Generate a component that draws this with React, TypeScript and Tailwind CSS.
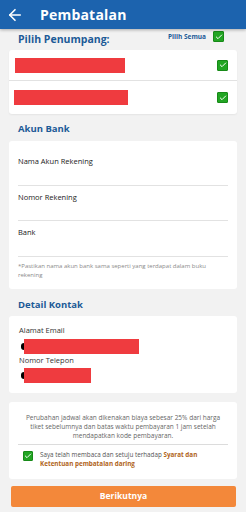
import { ArrowLeft, Check } from 'lucide-react'

function Box({ size = 'w-[11px] h-[11px]' }: { size?: string }) {
  return (
    <span className={`${size} bg-[#22a523] border border-[#178a18] rounded-[1px] flex items-center justify-center`}>
      <Check className="w-[8px] h-[8px] text-white" strokeWidth={3} />
    </span>
  )
}

export default function App() {
  return (
    <div className="w-[246px] h-[512px] bg-[#f2f2f2] overflow-hidden font-['Open_Sans',sans-serif] relative">
      {/* Header */}
      <div className="h-[29px] bg-[#1c63ae] flex items-center shadow-[0_1px_3px_rgba(0,0,0,0.3)] relative z-10">
        <ArrowLeft className="w-[18px] h-[18px] text-white ml-[6px]" strokeWidth={2.2} />
        <span className="text-white font-bold text-[14px] ml-[16px] tracking-[0.2px]">Pembatalan</span>
      </div>

      {/* Pilih Penumpang */}
      <div className="flex items-start justify-between pl-[18px] pr-[22px] h-[19px]">
        <span className="text-[#1c5a97] font-bold text-[10.5px] mt-[2px] leading-[16px]">Pilih Penumpang:</span>
        <div className="flex items-center gap-[7px] mt-[2px]">
          <span className="text-[#1c5a97] font-bold text-[6.5px]">Pilih Semua</span>
          <Box />
        </div>
      </div>

      <div className="mx-[9px] mt-[2px] bg-white rounded-[3px] shadow-[0_1px_2px_rgba(0,0,0,0.06)]">
        <div className="h-[31px] flex items-center justify-between pl-[6px] pr-[9px] border-b border-[#e2e2e2]">
          <div className="w-[110px] h-[15px] bg-[#ef3b3f]" />
          <Box />
        </div>
        <div className="h-[33px] flex items-center justify-between pl-[5px] pr-[9px]">
          <div className="w-[114px] h-[15px] bg-[#ef3b3f]" />
          <Box />
        </div>
      </div>

      {/* Akun Bank */}
      <div className="pl-[18px] mt-[5px] h-[19px] text-[#1c5a97] font-bold text-[9.5px] leading-[19px]">Akun Bank</div>
      <div className="mx-[9px] mt-[3px] bg-white rounded-[3px] px-[9px] pt-[9px] pb-[9px]">
        {['Nama Akun Rekening', 'Nomor Rekening', 'Bank'].map((label) => (
          <div key={label} className="h-[35.5px] border-b border-[#e2e2e2] flex items-start pt-[6px]">
            <span className="text-[#1a1a1a] text-[7.5px]">{label}</span>
          </div>
        ))}
        <p className="text-[#8a8a8a] text-[6px] leading-[9px] mt-[5px]">
          *Pastikan nama akun bank sama seperti yang terdapat dalam buku rekening
        </p>
      </div>

      {/* Detail Kontak */}
      <div className="pl-[18px] mt-[6px] h-[19px] text-[#1c5a97] font-bold text-[9.5px] leading-[19px]">Detail Kontak</div>
      <div className="mx-[9px] mt-[2px] bg-white rounded-[3px] pl-[10px] pt-[9px] pb-[10px]">
        <div className="text-[#333] text-[7.5px] leading-[10px]">Alamat Email</div>
        <div className="flex items-center mt-[4px] pl-[2px]">
          <span className="w-[3px] h-[7px] bg-black rounded-l-full" />
          <div className="w-[115px] h-[15px] bg-[#ef3b3f]" />
        </div>
        <div className="text-[#333] text-[7.5px] leading-[10px] mt-[1px]">Nomor Telepon</div>
        <div className="flex items-center mt-[3px] pl-[2px]">
          <span className="w-[3px] h-[7px] bg-black rounded-l-full" />
          <div className="w-[67px] h-[15px] bg-[#ef3b3f]" />
        </div>
      </div>

      {/* Info */}
      <div className="mx-[9px] mt-[9px] bg-white rounded-[3px] px-[9px] pt-[11px] pb-[11px]">
        <p className="text-[#666] text-[6.5px] leading-[9px] text-center px-[6px]">
          Perubahan jadwal akan dikenakan biaya sebesar 25% dari harga tiket sebelumnya dan batas waktu pembayaran 1 jam setelah mendapatkan kode pembayaran.
        </p>
        <div className="border-t border-[#dcdcdc] mt-[4px] pt-[5px] flex items-start gap-[7px] pl-[5px]">
          <span className="mt-[1px]"><Box size="w-[10px] h-[10px]" /></span>
          <p className="text-[#555] text-[6.3px] leading-[9px]">
            Saya telah membaca dan setuju terhadap <span className="text-[#b0641a] font-bold">Syarat dan Ketentuan pembatalan daring</span>
          </p>
        </div>
      </div>

      <button className="absolute left-[11px] right-[10px] top-[486px] h-[21px] bg-[#f3883a] rounded-[2px] text-white font-bold text-[8.5px]">
        Berikutnya
      </button>
    </div>
  )
}
